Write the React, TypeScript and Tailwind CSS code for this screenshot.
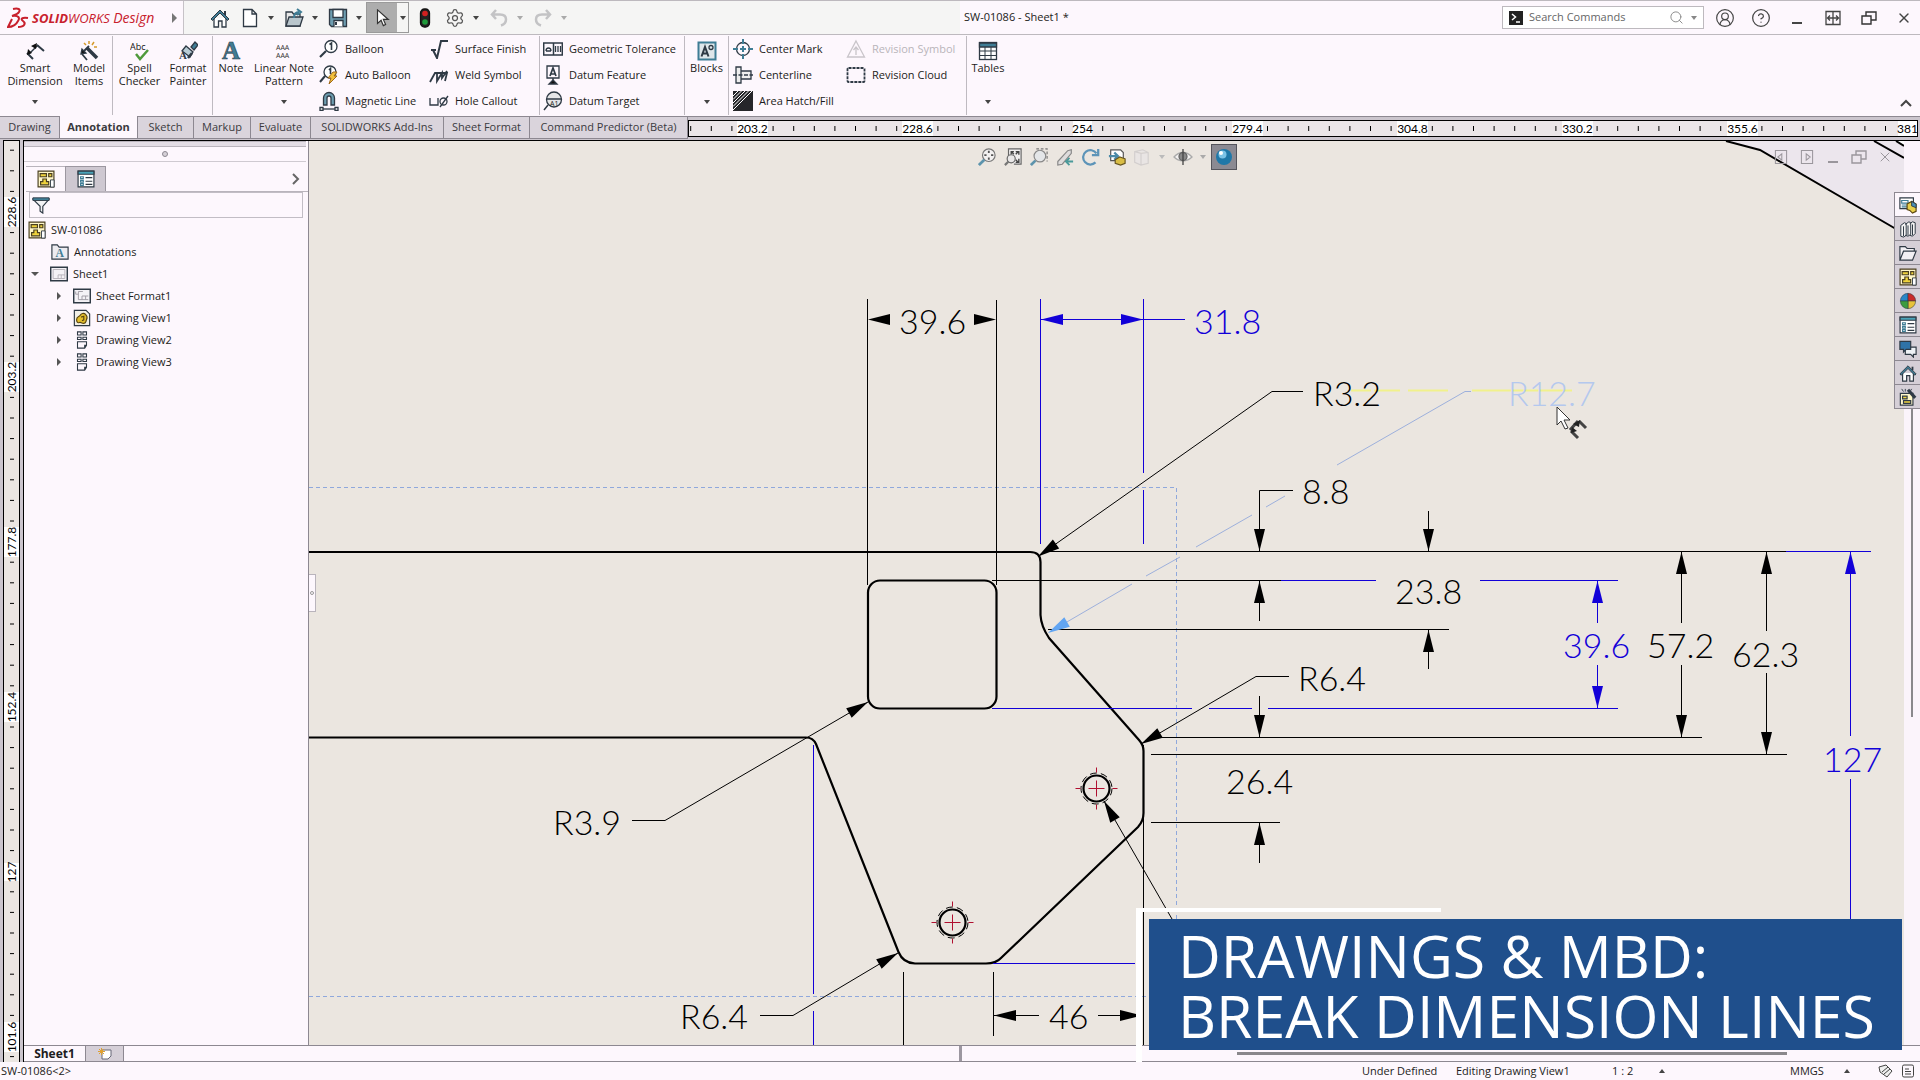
import React from 'react';
import { CircleHelp, CircleUserRound, Search, Settings, X } from 'lucide-react';

const INK = '#2f3a45';
const TEAL = '#3f7d95';
const BLUE = '#1200d8';

type IconProps = { size?: number; children: React.ReactNode };

function Icon({ size = 20, children }: IconProps) {
  return (
    <svg width={size} height={size} viewBox="0 0 20 20" fill="none" stroke={INK} strokeWidth="1.3" className="shrink-0" aria-hidden="true">
      {children}
    </svg>
  );
}

const icons = {
  home: (
    <>
      <path d="M4 10v9h4.500v-6h3.500v6H16v-9" fill="#fff" />
      <path d="M15 3v4" strokeWidth="2" />
      <path d="M1 11L10 2l9 9-1.500 1.500L10 5l-7.500 7.500z" fill={TEAL} strokeWidth="1" />
    </>
  ),
  page: <path d="M3.500 1.500h8.500l4.500 4.500v12.500h-13zM12 1.500V6h4.500" fill="#fff" />,
  open: (
    <>
      <path d="M2 4h6l1.500 2H16v12H2z" fill="#e8e8e8" />
      <path d="M5 9h14l-3 9H2z" fill="#b9c6cc" />
      <path d="M10 10c0-4 1-6 5-6M13 1l4 3-4 3" stroke={TEAL} strokeWidth="2" />
    </>
  ),
  save: (
    <>
      <path d="M1.500 1.500h17v17h-15l-2-2z" fill="#6d9db0" />
      <path d="M5 1.500h10v8H5zM6 18.500v-6h9v6" fill="#fff" />
      <path d="M8 14v3" strokeWidth="2" />
    </>
  ),
  cursor: <path d="M5 1v15l4-3.500 2.500 6 2.500-1.200-2.500-5.700H17z" fill="#fff" stroke="#333" />,
  traffic: (
    <>
      <rect x="5.500" y="1" width="9" height="18" rx="4" fill="#222" stroke="#111" />
      <circle cx="10" cy="5.500" r="2.800" fill="#d02020" stroke="none" />
      <circle cx="10" cy="14" r="2.800" fill="#1f9a3a" stroke="none" />
    </>
  ),
  undo: <path d="M7 2L3 6.500 7 11M3.500 6.500H11c4 0 6 2 6 5s-2 5-5 6" stroke="#c3c3c5" strokeWidth="2.500" />,
  redo: <path d="M13 2l4 4.500-4 4.500M16.500 6.500H9c-4 0-6 2-6 5s2 5 5 6" stroke="#c3c3c5" strokeWidth="2.500" />,
  smart: (
    <>
      <path d="M2 12l6 6M12 4l7 6" strokeWidth="2" />
      <path d="M4 13l9-9" strokeWidth="1.500" />
      <path d="M6 5l6-3-1 6zM2 14l1-6 4 4z" fill="#111" stroke="none" />
    </>
  ),
  model: (
    <>
      <path d="M3 13l5 6M4 11l6-6" strokeWidth="1.800" />
      <path d="M8 7l10 10" strokeWidth="3.500" />
      <path d="M2 13l1-5 4 4z" fill="#111" />
      <path d="M10 0v3M15 1l-2 3M18 6h-3M5 2l2 2" stroke="#d59a2a" strokeWidth="1.500" />
    </>
  ),
  spell: (
    <>
      <text x="0" y="9" fontSize="9" fontFamily="Open Sans, sans-serif" fill="#111" stroke="none">Abc</text>
      <path d="M6 13l4 5 8-9" stroke="#4f9a3c" strokeWidth="2.500" />
    </>
  ),
  format: (
    <>
      <path d="M13 6l4-5 3 3-4 5z" fill={TEAL} />
      <path d="M8 5l7 6-3 5-8-6z" fill="#b9cdd6" />
      <text x="1" y="18" fontSize="11" fontWeight="700" fontFamily="Liberation Serif, serif" fill={INK} stroke="none">A</text>
      <path d="M10 17l4-5" strokeWidth="2.500" />
    </>
  ),
  note: <text x="1" y="18" fontSize="25" fontWeight="700" fontFamily="Liberation Serif, serif" fill={TEAL} stroke={INK} strokeWidth="0.600">A</text>,
  pattern: (
    <g fontSize="7" fontFamily="Open Sans, sans-serif" fill="#333" stroke="none">
      <text x="2" y="9">AAA</text>
      <text x="2" y="17">AAA</text>
    </g>
  ),
  balloon: (
    <>
      <circle cx="12" cy="7.500" r="6" fill="#fff" />
      <path d="M7 12l-6 6" strokeWidth="2.200" />
      <path d="M10.500 5.500L12.500 4v7" strokeWidth="1.600" />
    </>
  ),
  autoBalloon: (
    <>
      <circle cx="11" cy="7" r="6" fill="#fff" />
      <path d="M6 11l-5 6" strokeWidth="2" />
      <path d="M10 5l1.500-1.500V9" strokeWidth="1.600" />
      <path d="M14 7h4l-3 4h3l-8 8 2-6H9z" fill="#f2c13c" stroke="#a06a1c" strokeWidth="1" />
    </>
  ),
  magnet: (
    <>
      <path d="M4.500 14V7a5.500 5.500 0 0111 0v7h-3.500V7a2 2 0 00-4 0v7z" fill="#6d9db0" />
      <path d="M4 18h12" />
      <path d="M1 16.500h3v3H1zM16 16.500h3v3h-3z" fill="#fff" />
    </>
  ),
  surface: <path d="M2 11h5M4 11l4 8L12 2h7" strokeWidth="2" />,
  weld: <path d="M1 17l5-9h12l-2 8M8 8v8l5-8v5l5-7" strokeWidth="1.800" />,
  hole: (
    <>
      <path d="M1 7v7h8V7" />
      <circle cx="14.500" cy="10.500" r="3.500" />
      <path d="M11 16l8-11" />
    </>
  ),
  geo: (
    <>
      <path d="M.7 4h18.600v12H.7zM10.500 4v12" strokeWidth="1.500" />
      <path d="M3 12h5M3 12a2.500 3 0 015 0M12.500 7v6M15 7v6M17.500 7v6" />
    </>
  ),
  datum: (
    <>
      <path d="M4 1h12v12H4zM10 13v3" />
      <path d="M7 11L10 3l3 8M8 9h4" strokeWidth="1.700" />
      <path d="M6 19h8l-4-4z" fill="#111" />
    </>
  ),
  target: (
    <>
      <circle cx="11" cy="8.500" r="7.500" fill="#e6e6e8" />
      <path d="M3.500 8h15M5 14l-4 5" strokeWidth="1.500" />
      <text x="7" y="15" fontSize="7" fontFamily="Open Sans, sans-serif" fill="#222" stroke="none">A1</text>
    </>
  ),
  blocks: (
    <>
      <rect x="1.500" y="1.500" width="17" height="17" fill="#dfe6ea" stroke={TEAL} strokeWidth="2" />
      <path d="M4.500 15.500L8 6l3.500 9.500M5.500 12.500h5" strokeWidth="2" />
      <circle cx="14" cy="6.500" r="2" />
    </>
  ),
  centerMark: (
    <>
      <circle cx="10" cy="10" r="6.500" />
      <path d="M10 0v5M10 15v5M0 10h5M15 10h5M10 7v6M7 10h6" stroke={TEAL} strokeWidth="2" />
    </>
  ),
  centerline: (
    <>
      <path d="M3 2h5v16H3zM8 6h10v8H8z" fill="#eee" />
      <path d="M0 10h20" strokeDasharray="4 1.500" />
    </>
  ),
  hatch: (
    <>
      <rect width="20" height="20" fill="#26262a" stroke="none" />
      <path d="M0 19L19 0M0 15.500L15.500 0M0 12L12 0M0 8.500L8.500 0M0 5L5 0" stroke="#fff" strokeWidth="1" />
    </>
  ),
  revSymbol: <path d="M10 2l8.500 16h-17zM10 16V8M7.500 11L10 8l2.500 3" stroke="#c9c5ca" />,
  revCloud: <rect x="1.500" y="3" width="17" height="14" rx="1" strokeDasharray="3 1" strokeWidth="1.800" />,
  tables: (
    <>
      <rect x="1.500" y="1.500" width="17" height="17" fill="#fff" />
      <path d="M1.500 2h17v4h-17z" fill={TEAL} />
      <path d="M1.500 10h17M1.500 14.500h17M7 6v12.500M13 6v12.500" strokeWidth="1" />
    </>
  ),
  drawing: (
    <>
      <path d="M1.200 1.200h17.600v17.600H1.200z" fill="#fff7c9" stroke="#4a3f20" />
      <path d="M3.500 4h7v3.500h-7zM13 4h3.500v3.500H13zM6.500 10h4v3h2.500v3.500H4V13h2.500z" fill="#f0d43c" stroke="#4a3f20" />
      <path d="M15 11h4v8h-4z" fill="#fff" strokeWidth="1" />
    </>
  ),
  properties: (
    <>
      <path d="M1.200 1.200h17.600v17.600H1.200z" fill="#fff" />
      <path d="M1.200 1.200h17.600v3.500H1.200z" fill="#4aa3b8" />
      <path d="M4 7.500h3v2H4zM4 11.500h3v2H4zM4 15h3v2H4z" stroke={TEAL} />
      <path d="M9.500 8.500H17M9.500 12.500H17M9.500 16H17" />
    </>
  ),
  filter: (
    <>
      <path d="M1 3.500h18l-7 8V19l-3-2v-5.500z" fill="#f2f2f4" />
      <path d="M1 2h18v3H1z" fill={TEAL} strokeWidth="1" />
    </>
  ),
  annotations: (
    <>
      <path d="M1 2h6l2 2.500h10V18H1z" fill="#ecebf0" />
      <text x="5" y="16" fontSize="13" fontWeight="700" fontFamily="Liberation Serif, serif" fill={TEAL} stroke="none">A</text>
    </>
  ),
  sheet: (
    <>
      <path d="M.8 2.500h18.400v15H.8z" fill="#f4f2f6" strokeWidth="1.600" />
      <path d="M3.500 5h13v10h-13zM9 11h7.500M9 11v4M12.500 11v4" stroke="#b4b0b8" strokeWidth="1" />
    </>
  ),
  sheetFormat: (
    <>
      <path d="M.8 2.500h18.400v15H.8z" fill="#f4f2f6" strokeWidth="1.600" />
      <path d="M3 5v3h3V5h5M6 8v6h4v-4h7M10 14h7M14 10v4" stroke="#9d99a2" strokeWidth="1" />
    </>
  ),
  viewPart: (
    <>
      <path d="M1.500 1.500h13l4 4v13h-17z" fill="#f2f0e6" />
      <path d="M4 12c0-4 3-3 4-5s4-3 6-1 2 4 1 6 0 4-3 4-3-2-5-1-3-1-3-3z" fill="#e3bf2c" stroke="#5a4610" />
      <path d="M9 9l3-1v4l-2 1" stroke="#5a4610" />
    </>
  ),
  view: <path d="M5 1h4v3.500H5zM11 1h4v3.500h-4zM5 7h4v2.500H5zM11 7h4v2.500h-4zM5 12h10v4l-2 3H5zM15 16h-2v3" strokeWidth="1.200" />,
  library: <path d="M2 6l4-3 2 1v13l-3 2-3-1zM7 5l4-3 2 1v13l-3 2-3-1M12 4l3-2 3 1v12l-3 3-3-1M5 7v11M10 6v11M15 5v12" fill="#f4f4f4" strokeWidth="1.100" />,
  folder: <path d="M1 18V3h6l2 2h8v3M1 18L5 8h14l-4 10z" fill="#f2f0f4" />,
  palette: (
    <>
      <path d="M10 10V1.500A8.500 8.500 0 001.500 10z" fill="#2a86c8" strokeWidth="0.600" />
      <path d="M10 10h8.500A8.500 8.500 0 0010 1.500z" fill="#c82a2a" strokeWidth="0.600" />
      <path d="M10 10v8.500A8.500 8.500 0 0018.500 10z" fill="#e8c33a" strokeWidth="0.600" />
      <path d="M10 10H1.500A8.500 8.500 0 0010 18.500z" fill="#3c9c40" strokeWidth="0.600" />
    </>
  ),
  forum: (
    <>
      <path d="M7 8h12v8h-3v3l-3-3H7z" fill="#eef2f6" />
      <path d="M1 1.500h12v9H8l-3 3v-3H1z" fill="#2f73a8" />
    </>
  ),
  resources: (
    <>
      <path d="M1 2h15v12H1z" fill="#fff" />
      <path d="M3 5h7v3H3zM3 10h6M3 12h6" stroke={TEAL} />
      <path d="M9 9l5-3 5 3v8l-4 2-3-3-3-1z" fill="#e8cf4a" stroke="#5a4610" />
      <path d="M14 6l5 3v4l-5-2z" fill="#4a8fb8" strokeWidth="1" />
    </>
  ),
  wizard: (
    <>
      <path d="M1.500 6h14v13h-14z" fill="#fff7c9" />
      <path d="M4 9h5v3H4zM5 14h8v3H5z" fill="#f0d43c" />
      <path d="M10 2l8 9" strokeWidth="3.500" />
      <path d="M3 1l2 3M7 1v3M14 1l-1 2" strokeWidth="1" />
    </>
  ),
  zoomFit: (
    <>
      <circle cx="12" cy="8" r="7" fill="#f2f0f0" stroke="#777" />
      <path d="M7 13l-6 6" stroke="#5d94ad" strokeWidth="3" />
      <path d="M12 3v2.500M12 10.500V13M7 8h2.500M14.500 8H17" strokeWidth="2" stroke="#555" />
    </>
  ),
  zoomArea: (
    <>
      <path d="M5 9V1h14v17h-8" stroke="#666" fill="#f0eeee" />
      <path d="M8 7V4h3M13 4h3.500v3.500M16.500 12v4H13M8 4l3 3M16 4l-3 3M16 16l-3-3" stroke="#444" strokeWidth="1.500" />
      <circle cx="8" cy="12" r="4.500" fill="#e9e7e7" stroke="#666" />
      <path d="M5 15l-4 4" strokeWidth="2.500" stroke="#777" />
    </>
  ),
  zoomBox: (
    <>
      <path d="M7 1h12v14" stroke="#777" strokeDasharray="3 2" />
      <circle cx="11" cy="9" r="6.500" fill="#e4e6e8" stroke="#888" />
      <path d="M6 14l-5 5" strokeWidth="3" stroke="#5d94ad" />
    </>
  ),
  previous: (
    <>
      <path d="M2 15L13 3l4-1v4L7 18l-5 1z" fill="#dedcdc" stroke="#888" />
      <path d="M19 15h-7M15 11l-4 4 4 4" stroke="#4b9a9a" strokeWidth="2" />
    </>
  ),
  rotate: <path d="M15 16A8 8 0 1116 6M18 1v7h-7" stroke="#5d94b8" strokeWidth="2.500" />,
  section: (
    <>
      <path d="M3 2h11l3 3v9H3z" fill="#fff" stroke="#555" />
      <path d="M1 9h9M7 5l4 4-4 4" stroke="#4b8aa8" strokeWidth="2.500" />
      <path d="M8 13l5-3 6 2v5l-5 2-6-2z" fill="#d9bd45" stroke="#665520" />
    </>
  ),
  cube: <path d="M3 4l9-2 6 3v12l-8 2-7-3zM10 6v13M3 4l7 2 8-1" fill="#e9e5e4" stroke="#d3cfce" />,
  eye: (
    <>
      <path d="M1 10c5-6 13-6 18 0-5 5-13 5-18 0z" fill="#f4f2f2" stroke="#aaa" />
      <circle cx="10" cy="9.500" r="4" fill="#888" stroke="#666" />
      <path d="M10 2v16" stroke="#444" />
    </>
  ),
  prevDoc: <path d="M3 2h14v16H3zM11 6v8l-5-4z" stroke="#9a969c" />,
  nextDoc: <path d="M3 2h14v16H3zM9 6v8l5-4z" stroke="#9a969c" />,
};

type IconName = keyof typeof icons;

function Caret({ className = 'text-[#444]' }: { className?: string }) {
  return (
    <svg width="6" height="4" viewBox="0 0 6 4" className={`shrink-0 ${className}`} aria-hidden="true">
      <path d="M0 0h6L3 4z" fill="currentColor" />
    </svg>
  );
}

function Restore({ stroke = '#333' }: { stroke?: string }) {
  return (
    <svg width="16" height="16" viewBox="0 0 16 16" fill="none" stroke={stroke} strokeWidth="1.400" aria-hidden="true">
      <path d="M1 6h9v8H1zM5 6V2h10v8h-5" />
    </svg>
  );
}

function QuickButton({ icon, label, caret = false, faint = false }: { icon: IconName; label: string; caret?: boolean; faint?: boolean }) {
  return (
    <button aria-label={label} className="flex h-full items-center gap-2">
      <Icon>{icons[icon]}</Icon>
      {caret && <Caret className={faint ? 'text-[#aaa]' : 'text-[#444]'} />}
    </button>
  );
}

function TitleBar() {
  return (
    <header className="flex h-[35px] shrink-0 border-y border-[#bdb9be] bg-[#fdf7fd]">
      <div className="flex w-[184px] items-center border-r border-[#c6c2c7] pl-[7px]">
        <svg width="22" height="22" viewBox="0 0 22 22" fill="none" stroke="#c8202c" strokeWidth="2" aria-hidden="true">
          <path d="M6 2c5-1 8 0 6 3-1 2-4 3-7 4 7-1 8 2 6 5-2 4-6 6-10 6l4-8" />
          <path d="M21 11c-6-1-8 1-5 3s2 6-5 6" />
        </svg>
        <span className="ml-[3px] whitespace-nowrap text-[13px] italic text-[#c8202c]">
          <b>SOLID</b>WORKS <span className="text-[14px]">Design</span>
        </span>
        <svg width="5" height="10" viewBox="0 0 5 10" className="ml-auto mr-[6px]" aria-hidden="true">
          <path d="M0 0v10l5-5z" fill="#777" />
        </svg>
      </div>
      <div className="flex w-[776px] items-center bg-[#f5f5f4] pl-[26px]">
        <QuickButton icon="home" label="Home" />
        <div className="ml-[10px] flex h-full items-center gap-[10px]">
          <QuickButton icon="page" label="New" caret />
          <QuickButton icon="open" label="Open" caret />
          <QuickButton icon="save" label="Save" caret />
        </div>
        <button aria-label="Select" className="ml-[4px] flex h-[31px] w-[43px] border border-[#9a9a9a]">
          <span className="flex h-full w-[30px] items-center justify-center bg-[#adadad]"><Icon size={18}>{icons.cursor}</Icon></span>
          <span className="flex h-full flex-1 items-center justify-center"><Caret /></span>
        </button>
        <div className="ml-[6px] flex h-full items-center gap-[10px]">
          <QuickButton icon="traffic" label="Rebuild" />
          <button aria-label="Options" className="flex h-full items-center gap-2">
            <Settings size={20} strokeWidth={1.5} color="#555" />
            <Caret />
          </button>
          <QuickButton icon="undo" label="Undo" caret faint />
          <QuickButton icon="redo" label="Redo" caret faint />
        </div>
      </div>
      <div className="flex flex-1 items-center">
        <h1 className="ml-[4px] whitespace-nowrap text-[11px]">SW-01086 - Sheet1 *</h1>
        <label className="ml-auto flex h-[23px] w-[202px] items-center border border-[#bdb9be] bg-white px-[6px]">
          <span className="flex h-[14px] w-[14px] items-center justify-center bg-[#222]">
            <svg width="10" height="10" viewBox="0 0 10 10" fill="none" stroke="#fff" strokeWidth="1.500" aria-hidden="true"><path d="M1 1l3.500 3L1 7M5 9h4" /></svg>
          </span>
          <input aria-label="Search Commands" placeholder="Search Commands" className="ml-[6px] w-0 flex-1 text-[11px] placeholder:text-[#666]" />
          <Search size={15} color="#888" strokeWidth={1.5} />
          <Caret className="ml-[7px] text-[#888]" />
        </label>
        <div className="flex text-[#444]">
          <button aria-label="Account" className="ml-[3px] flex w-[36px] items-center justify-center"><CircleUserRound size={20} strokeWidth={1.4} /></button>
          <button aria-label="Help" className="flex w-[36px] items-center justify-center"><CircleHelp size={20} strokeWidth={1.5} /></button>
          <button aria-label="Minimize" className="flex w-[36px] items-center justify-center pt-[10px]"><span className="h-[2px] w-[10px] bg-[#444]" /></button>
          <button aria-label="Span displays" className="flex w-[36px] items-center justify-center">
            <svg width="16" height="16" viewBox="0 0 16 16" fill="none" stroke="#444" strokeWidth="1.300" aria-hidden="true"><path d="M1 1.500h14v13H1zM8 1.500v13M2.500 8h11M5 5.500L2.500 8 5 10.500M11 5.500L13.500 8 11 10.500" /></svg>
          </button>
          <button aria-label="Restore" className="flex w-[36px] items-center justify-center"><Restore /></button>
          <button aria-label="Close" className="flex w-[33px] items-center justify-center"><X size={16} strokeWidth={2} /></button>
        </div>
      </div>
    </header>
  );
}

function BigButton({ icon, lines, width, caret = false }: { icon: IconName; lines: string[]; width: string; caret?: boolean }) {
  return (
    <button className={`flex h-full flex-col items-center pt-[6px] pb-[12px] leading-[13px] ${width}`}>
      <Icon>{icons[icon]}</Icon>
      {lines.map((line) => (
        <span key={line} className="whitespace-nowrap">{line}</span>
      ))}
      {caret && <Caret className="mt-auto text-[#444]" />}
    </button>
  );
}

function SmallColumn({ items, width }: { items: [IconName, string][]; width: string }) {
  return (
    <div className={`flex flex-col pt-px ${width}`}>
      {items.map(([icon, label]) => (
        <button key={label} disabled={icon === 'revSymbol'} className="flex h-[26px] items-center gap-[6px] whitespace-nowrap disabled:text-[#b9b5ba]">
          <Icon>{icons[icon]}</Icon>
          {label}
        </button>
      ))}
    </div>
  );
}

function Divider() {
  return <div className="my-[1px] h-[79px] w-px shrink-0 bg-[#bfbac1]" />;
}

function Ribbon() {
  return (
    <section aria-label="Annotation commands" className="flex h-[81px] shrink-0 bg-[#fdf7fd] text-[11px]">
      <BigButton icon="smart" lines={['Smart', 'Dimension']} width="w-[70px]" caret />
      <BigButton icon="model" lines={['Model', 'Items']} width="w-[42px] pr-[4px]" />
      <Divider />
      <BigButton icon="spell" lines={['Spell', 'Checker']} width="w-[53px]" />
      <BigButton icon="format" lines={['Format', 'Painter']} width="w-[46px] pr-[2px]" />
      <Divider />
      <BigButton icon="note" lines={['Note']} width="w-[36px]" />
      <BigButton icon="pattern" lines={['Linear Note', 'Pattern']} width="w-[70px]" caret />
      <SmallColumn width="w-[110px]" items={[['balloon', 'Balloon'], ['autoBalloon', 'Auto Balloon'], ['magnet', 'Magnetic Line']]} />
      <SmallColumn width="w-[110px]" items={[['surface', 'Surface Finish'], ['weld', 'Weld Symbol'], ['hole', 'Hole Callout']]} />
      <Divider />
      <div className="w-[3px]" />
      <SmallColumn width="w-[141px]" items={[['geo', 'Geometric Tolerance'], ['datum', 'Datum Feature'], ['target', 'Datum Target']]} />
      <Divider />
      <BigButton icon="blocks" lines={['Blocks']} width="w-[43px]" caret />
      <Divider />
      <div className="w-[4px]" />
      <SmallColumn width="w-[113px]" items={[['centerMark', 'Center Mark'], ['centerline', 'Centerline'], ['hatch', 'Area Hatch/Fill']]} />
      <SmallColumn width="w-[120px]" items={[['revSymbol', 'Revision Symbol'], ['revCloud', 'Revision Cloud']]} />
      <Divider />
      <BigButton icon="tables" lines={['Tables']} width="w-[42px]" caret />
      <button aria-label="Collapse ribbon" className="mt-auto mr-[8px] mb-[8px] ml-auto">
        <svg width="12" height="10" viewBox="0 0 12 10" fill="none" stroke="#444" strokeWidth="2" aria-hidden="true"><path d="M1 8l5-5 5 5" /></svg>
      </button>
    </section>
  );
}

const tabs: [string, string][] = [
  ['Drawing', 'w-[60px]'],
  ['Annotation', 'w-[78px]'],
  ['Sketch', 'w-[56px]'],
  ['Markup', 'w-[57px]'],
  ['Evaluate', 'w-[60px]'],
  ['SOLIDWORKS Add-Ins', 'w-[133px]'],
  ['Sheet Format', 'w-[86px]'],
  ['Command Predictor (Beta)', 'w-[158px]'],
];

function TabRow() {
  return (
    <div className="flex h-[24px] shrink-0 bg-[#cbc5cd]">
      <nav className="flex h-[23px] text-[11px] text-[#3a3a3e]">
        {tabs.map(([name, width]) => (
          <button
            key={name}
            className={`border-r border-b border-[#8d8891] whitespace-nowrap ${width} ${
              name === 'Annotation' ? 'bg-[#fdf7fd] font-bold' : 'border-t bg-[#dad4dc]'
            }`}
          >
            {name}
          </button>
        ))}
      </nav>
      <div className="flex-1 border-t border-[#8d8891] pt-[3px] pr-[2px]">
        <svg width="100%" height="17" className="block border border-black bg-[#ebe6e8]" aria-label="Horizontal ruler">
          {Array.from({ length: 60 }, (_, i) => (
            <path key={i} d={`M${63.5 + (i - 3) * 20.6} 5v5`} stroke="#000" />
          ))}
          {['203.2', '228.6', '254', '279.4', '304.8', '330.2', '355.6', '381'].map((n, i) => (
            <g key={n}>
              <rect x={63 + i * 165 - n.length * 3} y="0" width={n.length * 6 + 1} height="15" fill="#fff" />
              <text x={63.5 + i * 165} y="12" fontSize="12" textAnchor="middle" fontFamily="Lato, sans-serif">{n}</text>
            </g>
          ))}
        </svg>
      </div>
    </div>
  );
}

function SideRuler() {
  return (
    <div className="w-[24px] shrink-0 border-r border-black bg-[#cbc5cd] pl-[3px] pr-[3px]">
      <svg width="17" height="100%" className="block border border-b-0 border-black bg-[#ebe6e2]" aria-label="Vertical ruler">
        {Array.from({ length: 46 }, (_, i) => (
          <path key={i} d={`M6 ${71 + (i - 3) * 20.6}h4`} stroke="#000" />
        ))}
        {['228.6', '203.2', '177.8', '152.4', '127', '101.6'].map((n, i) => (
          <g key={n} transform={`translate(8 ${71 + i * 165})`}>
            <rect x="-8" y={-n.length * 3} width="15" height={n.length * 6} fill="#fff" />
            <text transform="rotate(-90)" y="4" fontSize="12" textAnchor="middle" fontFamily="Lato, sans-serif">{n}</text>
          </g>
        ))}
      </svg>
    </div>
  );
}

const tree: { icon: IconName; label: string; indent: string; caret?: 'open' | 'closed' }[] = [
  { icon: 'drawing', label: 'SW-01086', indent: 'pl-0' },
  { icon: 'annotations', label: 'Annotations', indent: 'pl-[23px]' },
  { icon: 'sheet', label: 'Sheet1', indent: 'pl-[3px]', caret: 'open' },
  { icon: 'sheetFormat', label: 'Sheet Format1', indent: 'pl-[26px]', caret: 'closed' },
  { icon: 'viewPart', label: 'Drawing View1', indent: 'pl-[26px]', caret: 'closed' },
  { icon: 'view', label: 'Drawing View2', indent: 'pl-[26px]', caret: 'closed' },
  { icon: 'view', label: 'Drawing View3', indent: 'pl-[26px]', caret: 'closed' },
];

function TreePanel() {
  return (
    <aside className="flex w-[285px] shrink-0 flex-col border-r border-[#8d8891] bg-[#fdf7fd] text-[11px]">
      <div className="mr-[2px] h-[6px] border-t border-b border-[#b9b4bc] bg-[#e3dde5]" />
      <div className="mr-[2px] flex h-[15px] items-center justify-center border-b border-[#cfcad1]">
        <span className="h-[6px] w-[6px] rounded-full border border-[#8d8891] bg-[#d5d0d7]" />
      </div>
      <div className="mt-[4px] ml-[2px] flex h-[26px] items-center border-b border-[#b9b4bc]">
        <button aria-label="Drawing tree" className="flex h-[25px] w-[39px] items-center justify-center border-t border-[#b9b4bc]"><Icon size={18}>{icons.drawing}</Icon></button>
        <button aria-label="Properties" className="flex h-[25px] w-[41px] items-center justify-center border border-b-0 border-[#9c97a0] bg-[#cec8d1]"><Icon size={18}>{icons.properties}</Icon></button>
        <button aria-label="Expand panel" className="mr-[8px] ml-auto">
          <svg width="8" height="12" viewBox="0 0 8 12" fill="none" stroke="#666" strokeWidth="2" aria-hidden="true"><path d="M1 1l5 5-5 5" /></svg>
        </button>
      </div>
      <label className="mr-[5px] ml-[5px] flex h-[26px] items-center border border-[#c2bdc5] pl-[2px]">
        <Icon size={18}>{icons.filter}</Icon>
        <input aria-label="Filter tree" className="w-0 flex-1" />
      </label>
      <ul className="pt-px pl-[4px]">
        {tree.map((row) => (
          <li key={row.label} className={`flex h-[22px] items-center ${row.indent}`}>
            {row.caret && (
              <svg width="8" height="8" viewBox="0 0 8 8" className="mr-[11px] shrink-0" aria-hidden="true">
                <path d={row.caret === 'open' ? 'M0 2h8L4 6z' : 'M3 0v8l4-4z'} fill="#555" />
              </svg>
            )}
            <Icon size={18}>{icons[row.icon]}</Icon>
            <span className="ml-[5px]">{row.label}</span>
          </li>
        ))}
      </ul>
    </aside>
  );
}

// Arrowhead with its tip at (x, y); the angle points from the tip to the tail.
function Arrow({ x, y, angle, color = '#000' }: { x: number; y: number; angle: number; color?: string }) {
  return <path d="M0 0L22 -5.500V5.500Z" transform={`translate(${x} ${y}) rotate(${angle})`} fill={color} stroke="none" />;
}

function Hole({ x, y }: { x: number; y: number }) {
  return (
    <g transform={`translate(${x} ${y})`}>
      <circle r="13" strokeWidth="2.200" />
      <circle r="15.500" strokeDasharray="7 4" />
      <path d="M-8 0H8M0 -8V8M-21 0h5M16 0h5M0 -21v5M0 16v5" stroke="#b01030" />
    </g>
  );
}

const dimensions: { x: number; y: number; text: string; color?: string }[] = [
  { x: 899, y: 334, text: '39.6' },
  { x: 1194, y: 334, text: '31.8', color: BLUE },
  { x: 1313, y: 406, text: 'R3.2' },
  { x: 1508, y: 406, text: 'R12.7', color: '#b4c8ee' },
  { x: 1302, y: 504, text: '8.8' },
  { x: 1395, y: 604, text: '23.8' },
  { x: 1563, y: 658, text: '39.6', color: BLUE },
  { x: 1647, y: 658, text: '57.2' },
  { x: 1732, y: 667, text: '62.3' },
  { x: 1823, y: 772, text: '127', color: BLUE },
  { x: 1298, y: 691, text: 'R6.4' },
  { x: 1226, y: 794, text: '26.4' },
  { x: 553, y: 835, text: 'R3.9' },
  { x: 680, y: 1029, text: 'R6.4' },
  { x: 1049, y: 1029, text: '46' },
];

function DrawingSheet() {
  return (
    <svg viewBox="309 141 1595 904" preserveAspectRatio="xMinYMin slice" className="absolute inset-0 h-full w-full" fill="none" stroke="#000" role="img" aria-label="Bracket drawing view">
      <path d="M1726 141L1760 150L1894 228H1904V141Z" fill="#ece6ed" stroke="none" />
      <path d="M1896 141l8 5v-5z" fill="#fff" stroke="none" />
      <path d="M1726 141L1760 150L1896 229M1874 141L1904 158M1896 141L1904 146" strokeWidth="2" />

      {/* view border */}
      <path d="M309 487.500H1176.500V996.500H309" stroke="#8fa8dc" strokeDasharray="4 3" />

      {/* part outline */}
      <g strokeWidth="2.200">
        <path d="M309 552H1030Q1040.500 552 1040.500 562V615Q1041 626 1049 638L1139 740Q1143.500 745 1143.500 751V813Q1143.500 821 1138 827L1001 958Q996 963.500 986 963.500H915Q903 963 898.500 952L816 744Q813 737.500 806 737.500H309" />
        <rect x="868" y="580.500" width="128.500" height="128" rx="12" />
      </g>
      <Hole x={1096.5} y={788.5} />
      <Hole x={952.5} y={922.5} />

      {/* driven dimensions */}
      <path d="M867.500 299V585M996.500 300V585M1050 551.500H1786M992 580.500H1281M1048 629.500H1449M1162 737.500H1702M1151 754.500H1787M1151 822.500H1280M1143.500 745V1045M903.500 972V1045M993.500 972V1036" />
      <path d="M1303 391.500H1272L1038 556.500M1293 490.500H1259.500V551M1259.500 581V621M1428.500 511V551M1428.500 630V669M1681.500 552V623M1681.500 665V737M1766.500 552V631M1766.500 673V754M1289 676.500H1256L1141 744M1259.500 696V737M1259.500 823V863M1104 801L1172 919M632 820.500H665L868 702M760 1015.500H793L898 953M994 1015.500H1039M1098 1015.500H1140" />
      <Arrow x={868} y={319.5} angle={0} />
      <Arrow x={996} y={319.5} angle={180} />
      <Arrow x={1038} y={556.5} angle={-35} />
      <Arrow x={1259.5} y={551} angle={-90} />
      <Arrow x={1259.5} y={581} angle={90} />
      <Arrow x={1428.5} y={551} angle={-90} />
      <Arrow x={1428.5} y={630} angle={90} />
      <Arrow x={1681.5} y={552} angle={90} />
      <Arrow x={1681.5} y={737} angle={-90} />
      <Arrow x={1766.5} y={552} angle={90} />
      <Arrow x={1766.5} y={754} angle={-90} />
      <Arrow x={1141} y={744} angle={-30} />
      <Arrow x={1259.5} y={737} angle={-90} />
      <Arrow x={1259.5} y={823} angle={90} />
      <Arrow x={1104} y={801} angle={60} />
      <Arrow x={868} y={702} angle={150} />
      <Arrow x={898} y={953} angle={150} />
      <Arrow x={994} y={1015.5} angle={0} />
      <Arrow x={1142} y={1015.5} angle={180} />

      {/* model dimensions */}
      <g stroke={BLUE}>
        <path d="M1040.500 299V544M1143.500 299V473M1143.500 490V544M1041 319.500H1185M1786 551.500H1871M1281 580.500H1376M1480 580.500H1618M992 708.500H1192M1209 708.500H1252M1268 708.500H1618M1597.500 581V623M1597.500 665V708M1850.500 552V736M1850.500 779V919M813.500 745V994M813.500 1011V1045M993 963.500H1135" />
        <Arrow x={1041} y={319.5} angle={0} color={BLUE} />
        <Arrow x={1143} y={319.5} angle={180} color={BLUE} />
        <Arrow x={1597.5} y={581} angle={90} color={BLUE} />
        <Arrow x={1597.5} y={708} angle={-90} color={BLUE} />
        <Arrow x={1850.5} y={552} angle={90} color={BLUE} />
      </g>

      {/* dimension being dragged */}
      <path d="M1060 626L1132 584M1146 576L1180 557M1196 547L1252 515M1266 507L1285 496M1337 465L1465 391.500H1471" stroke="#9db0dc" />
      <Arrow x={1048} y={633} angle={-30} color="#62a5f2" />
      <path d="M1351 390.500H1371M1374 390.500H1400M1408 390.500H1448M1472 390.500H1572" stroke="#f1f18c" strokeWidth="2" />

      <g fontFamily="Lato, sans-serif" fontSize="34" fontWeight="300" stroke="none">
        {dimensions.map((d) => (
          <text key={`${d.x}-${d.y}`} x={d.x} y={d.y} fill={d.color ?? '#000'}>{d.text}</text>
        ))}
      </g>

      <path d="M1557 407v18l4-4 4 8 3-1-4-8h6z" fill="#fff" stroke="#333" />
      <path d="M1570 430l8-9M1579 421l7 7M1571 431l7 7" stroke="#444" strokeWidth="3" />
      <path d="M1571 433l1-6 5 4zM1573 424l7-4-1 7z" fill="#222" stroke="none" />
    </svg>
  );
}

function ViewToolbar() {
  const first: IconName[] = ['zoomFit', 'zoomArea', 'zoomBox', 'previous', 'rotate', 'section'];
  return (
    <div className="absolute top-[3px] left-[665px] flex h-[26px] items-center">
      {first.map((name) => (
        <button key={name} aria-label={name} className="flex w-[26px] justify-center"><Icon size={18}>{icons[name]}</Icon></button>
      ))}
      <button aria-label="Display style" className="ml-[1px] flex items-center gap-[9px] pl-[1px]"><Icon size={18}>{icons.cube}</Icon><Caret className="text-[#bbb]" /></button>
      <button aria-label="Hide items" className="ml-[8px] flex items-center gap-[7px]"><Icon size={20}>{icons.eye}</Icon><Caret className="text-[#aaa]" /></button>
      <button aria-label="View settings" className="ml-[5px] flex h-[26px] w-[26px] items-center justify-center border border-[#55555c] bg-[#8b8a92]">
        <svg width="18" height="18" viewBox="0 0 18 18" aria-hidden="true">
          <circle cx="9" cy="9" r="8" fill="#1f78a8" />
          <circle cx="7.500" cy="6.500" r="4" fill="#7cc3e6" />
          <circle cx="6" cy="5" r="2" fill="#fff" />
        </svg>
      </button>
    </div>
  );
}

function DocumentControls() {
  return (
    <div className="absolute top-[5px] right-[6px] flex h-[22px] text-[#9a969c]">
      <button aria-label="Previous window" className="flex w-[26px] items-center justify-center"><Icon size={16}>{icons.prevDoc}</Icon></button>
      <button aria-label="Next window" className="flex w-[26px] items-center justify-center"><Icon size={16}>{icons.nextDoc}</Icon></button>
      <button aria-label="Minimize drawing" className="flex w-[26px] items-center justify-center pt-[10px]"><span className="h-[2px] w-[10px] bg-[#9a969c]" /></button>
      <button aria-label="Restore drawing" className="flex w-[26px] items-center justify-center"><Restore stroke="#9a969c" /></button>
      <button aria-label="Close drawing" className="flex w-[26px] items-center justify-center"><X size={16} strokeWidth={1.5} /></button>
    </div>
  );
}

function TaskPane() {
  const panes: IconName[] = ['resources', 'library', 'folder', 'drawing', 'palette', 'properties', 'forum', 'home', 'wizard'];
  return (
    <div className="absolute top-[52px] right-0 w-[26px] border-t border-l border-[#8d8891]">
      {panes.map((name, i) => (
        <button key={name} aria-label={name} className={`flex h-[24px] w-full items-center justify-center border-b border-[#8d8891] ${i === 0 ? 'bg-[#fdf7fd]' : 'bg-[#d5cfd7]'}`}>
          <Icon size={18}>{icons[name]}</Icon>
        </button>
      ))}
    </div>
  );
}

function Banner() {
  return (
    <div className="absolute right-[18px] bottom-[18px] h-[154px] w-[766px]">
      <div className="absolute top-0 left-0 h-[4px] w-[305px] bg-white" />
      <div className="absolute top-0 left-0 h-full w-[6px] bg-white" />
      <h2 className="absolute top-[11px] right-0 flex h-[131px] w-[753px] flex-col justify-center bg-[#1f4f8c] pl-[29px] text-[59px] leading-[60px] whitespace-nowrap text-white">
        <span>DRAWINGS &amp; MBD:</span>
        <span>BREAK DIMENSION LINES</span>
      </h2>
    </div>
  );
}

function SheetBar() {
  return (
    <div className="flex h-[17px] shrink-0 border-y border-[#8d8891] bg-[#fdf7fd] text-[12px] leading-[14px]">
      <button className="w-[62px] border-r border-[#8d8891] font-bold">Sheet1</button>
      <button aria-label="Add sheet" className="flex w-[38px] items-center justify-center border-r border-[#8d8891] bg-[#d5cfd7]">
        <svg width="14" height="12" viewBox="0 0 14 12" fill="#fff" stroke="#667" aria-hidden="true">
          <path d="M4 2h9v6l-3 3H4z" />
          <path d="M1 1l5 5M6 1L1 6M3.500 0v7M0 3.500h7" stroke="#e0a030" />
        </svg>
      </button>
      <div className="ml-[835px] w-[3px] bg-[#9c97a0]" />
      <div className="mr-[133px] ml-auto flex w-[550px] items-center"><div className="h-[3px] w-full bg-[#8a888c]" /></div>
    </div>
  );
}

function StatusBar() {
  return (
    <footer className="flex h-[18px] shrink-0 items-center bg-[#fdf7fd] pr-[5px] pl-[1px] text-[11px] whitespace-nowrap">
      <span>SW-01086&lt;2&gt;</span>
      <span className="ml-auto w-[94px]">Under Defined</span>
      <span className="w-[156px]">Editing Drawing View1</span>
      <span className="w-[47px]">1 : 2</span>
      <svg width="6" height="4" viewBox="0 0 6 4" aria-hidden="true"><path d="M0 4h6L3 0z" fill="#444" /></svg>
      <span className="ml-[125px] w-[54px]">MMGS</span>
      <svg width="6" height="4" viewBox="0 0 6 4" aria-hidden="true"><path d="M0 4h6L3 0z" fill="#444" /></svg>
      <svg width="16" height="14" viewBox="0 0 16 14" fill="#eee" stroke="#444" className="ml-[27px]" aria-hidden="true">
        <path d="M2 3l7-2 6 6-5 6-7-5zM5 8l6-5M7 10l6-5" />
      </svg>
      <svg width="14" height="14" viewBox="0 0 14 14" fill="none" stroke="#444" className="ml-[8px]" aria-hidden="true">
        <rect x="1.500" y="1" width="11" height="12" rx="1.500" />
        <path d="M4 5h4M4 7.500h6M4 10h6" />
      </svg>
    </footer>
  );
}

function App() {
  return (
    <div className="flex h-screen flex-col overflow-hidden bg-[#fdf7fd] font-['Open_Sans',sans-serif] text-[#1c1c20]">
      <TitleBar />
      <Ribbon />
      <TabRow />
      <div className="relative flex min-h-0 flex-1">
        <SideRuler />
        <div className="flex min-w-0 flex-1 flex-col border-t border-black">
          <div className="flex min-h-0 flex-1">
            <TreePanel />
            <main className="relative min-w-0 flex-1 overflow-hidden bg-[#ebe6e0]">
              <DrawingSheet />
              <ViewToolbar />
              <DocumentControls />
              <button aria-label="Collapse tree" className="absolute top-[433px] left-0 flex h-[38px] w-[7px] items-center justify-center border border-l-0 border-[#b9b4bc] bg-[#fdf7fd]">
                <span className="h-[4px] w-[4px] rounded-full border border-[#999]" />
              </button>
            </main>
            <div className="flex w-[16px] shrink-0 justify-center bg-[#fbf4fb] pt-[268px]">
              <div className="h-[308px] w-[2px] bg-[#8a888c]" />
            </div>
          </div>
          <SheetBar />
        </div>
        <TaskPane />
      </div>
      <StatusBar />
      <Banner />
    </div>
  );
}

export default App;
